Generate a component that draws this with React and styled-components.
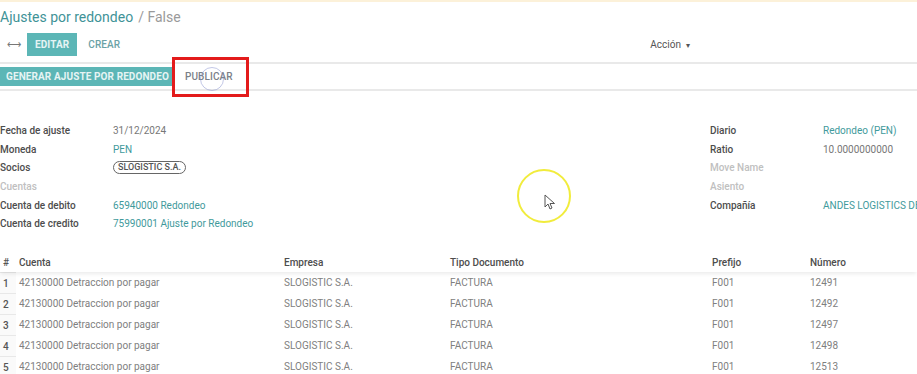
import React from 'react';
import styled, { createGlobalStyle } from 'styled-components';

const GlobalStyle = createGlobalStyle`
  html, body { margin: 0; padding: 0; background: #fff; }
  body { font-family: Roboto, "Liberation Sans", sans-serif; color: #666; }
`;

const Page = styled.div`
  position: relative;
  width: 917px;
  height: 374px;
  overflow: hidden;
`;

const TopStripe = styled.div`
  height: 2px;
  background: #fcf1d9;
`;

const Title = styled.div`
  height: 26px;
  display: flex;
  align-items: center;
  padding-top: 2px;
  font-size: 14px;
  color: #3f9397;
  span { color: #9a9a9a; margin-left: 5px; }
`;

const ControlRow = styled.div`
  height: 29px;
  display: flex;
  align-items: center;
  padding-left: 7px;
  padding-bottom: 3px;
  border-bottom: 2px solid #e9e9e9;
`;

const Arrow = styled.span`
  font-size: 10px;
  color: #777;
  width: 20px;
`;

const Button = styled.div`
  height: ${p => p.$h || 23}px;
  padding: 0 ${p => p.$pad || 8}px;
  display: flex;
  align-items: center;
  font-size: 10px;
  font-weight: ${p => (p.$primary ? 700 : 500)};
  color: ${p => (p.$primary ? '#e6f4f4' : p.$muted ? '#7a8088' : '#6ba2a6')};
  background: ${p => (p.$primary ? '#5cb6b6' : 'transparent')};
  letter-spacing: 0.1px;
`;

const Action = styled.div`
  margin-left: auto;
  margin-right: 227px;
  font-size: 10px;
  color: #555;
  &::after { content: '▾'; font-size: 8px; margin-left: 5px; }
`;

const StatusBar = styled.div`
  height: 25px;
  display: flex;
  align-items: center;
  border-bottom: 2px solid #e9e9e9;
`;

const Form = styled.div`
  display: flex;
  padding-top: 30px;
`;

const Group = styled.div`
  display: grid;
  grid-template-columns: ${p => p.$label}px 1fr;
  grid-auto-rows: 18.7px;
  align-items: center;
  font-size: 10px;
  width: ${p => p.$w}px;
`;

const Label = styled.div`
  font-weight: 500;
  color: ${p => (p.$dim ? '#c0c0c0' : '#4d4d4d')};
`;

const Value = styled.div`
  color: ${p => (p.$link ? '#3f9a9c' : '#777')};
  white-space: nowrap;
`;

const Tag = styled.span`
  display: inline-block;
  border: 1.5px solid #666;
  border-radius: 8px;
  padding: 0 4px;
  font-size: 9px;
  font-weight: 500;
  color: #555;
  line-height: 11px;
`;

const Table = styled.div`
  margin-top: 20px;
  font-size: 10px;
`;

const Row = styled.div`
  display: grid;
  grid-template-columns: 16px 265px 166px 262px 98px 1fr;
  height: ${p => (p.$head ? 19 : 21)}px;
  align-items: center;
  color: ${p => (p.$head ? '#4d4d4d' : '#808080')};
  font-weight: ${p => (p.$head ? 500 : 400)};
  box-shadow: ${p => (p.$head ? '0 3px 4px -1px rgba(0,0,0,0.08)' : 'none')};
  position: relative;
  z-index: ${p => (p.$head ? 1 : 0)};
`;

const Num = styled.div`
  height: 100%;
  display: flex;
  align-items: center;
  padding-left: 3px;
  color: #555;
  font-weight: 500;
  background: ${p => (p.$head ? 'transparent' : '#fafafa')};
  border-top: ${p => (p.$head ? 'none' : '1px solid #e8e8e8')};
  box-sizing: border-box;
`;

const Cell = styled.div`
  padding-left: 3px;
`;

const RedBox = styled.div`
  position: absolute;
  left: 172px;
  top: 57px;
  width: 71px;
  height: 34px;
  border: 3px solid #e31b1b;
`;

const Ripple = styled.div`
  position: absolute;
  left: 200px;
  top: 67px;
  width: 22px;
  height: 22px;
  border-radius: 50%;
  border: 1.5px solid rgba(120, 130, 200, 0.45);
`;

const Highlight = styled.div`
  position: absolute;
  left: 517px;
  top: 169px;
  width: 50px;
  height: 50px;
  border-radius: 50%;
  border: 2.5px solid #f1ec3c;
`;

const Cursor = styled.svg`
  position: absolute;
  left: 544px;
  top: 194px;
`;

const rows = [
  ['1', '12491'],
  ['2', '12492'],
  ['3', '12497'],
  ['4', '12498'],
  ['5', '12513'],
];

export default function App() {
  return (
    <Page>
      <GlobalStyle />
      <TopStripe />
      <Title>Ajustes por redondeo <span>/ False</span></Title>
      <ControlRow>
        <Arrow>⟷</Arrow>
        <Button $primary>EDITAR</Button>
        <Button $pad={11}>CREAR</Button>
        <Action>Acción</Action>
      </ControlRow>
      <StatusBar>
        <Button $primary $pad={6} $h={19}>GENERAR AJUSTE POR REDONDEO</Button>
        <Button $muted $pad={10}>PUBLICAR</Button>
      </StatusBar>
      <Form>
        <Group $label={113} $w={710}>
          <Label>Fecha de ajuste</Label><Value>31/12/2024</Value>
          <Label>Moneda</Label><Value $link>PEN</Value>
          <Label>Socios</Label><Value><Tag>SLOGISTIC S.A.</Tag></Value>
          <Label $dim>Cuentas</Label><Value />
          <Label>Cuenta de debito</Label><Value $link>65940000 Redondeo</Value>
          <Label>Cuenta de credito</Label><Value $link>75990001 Ajuste por Redondeo</Value>
        </Group>
        <Group $label={113} $w={207}>
          <Label>Diario</Label><Value $link>Redondeo (PEN)</Value>
          <Label>Ratio</Label><Value>10.0000000000</Value>
          <Label $dim>Move Name</Label><Value />
          <Label $dim>Asiento</Label><Value />
          <Label>Compañía</Label><Value $link>ANDES LOGISTICS DEL PERU</Value>
        </Group>
      </Form>
      <Table>
        <Row $head>
          <Num $head>#</Num>
          <Cell>Cuenta</Cell>
          <Cell>Empresa</Cell>
          <Cell>Tipo Documento</Cell>
          <Cell>Prefijo</Cell>
          <Cell>Número</Cell>
        </Row>
        {rows.map(([n, num]) => (
          <Row key={n}>
            <Num>{n}</Num>
            <Cell>42130000 Detraccion por pagar</Cell>
            <Cell>SLOGISTIC S.A.</Cell>
            <Cell>FACTURA</Cell>
            <Cell>F001</Cell>
            <Cell>{num}</Cell>
          </Row>
        ))}
      </Table>
      <RedBox />
      <Ripple />
      <Highlight />
      <Cursor width="12" height="16" viewBox="0 0 12 16">
        <path d="M1 1 L1 13 L4 10 L6 15 L8 14 L6 9.5 L10.5 9.5 Z" fill="#fff" stroke="#555" strokeWidth="1" />
      </Cursor>
    </Page>
  );
}
